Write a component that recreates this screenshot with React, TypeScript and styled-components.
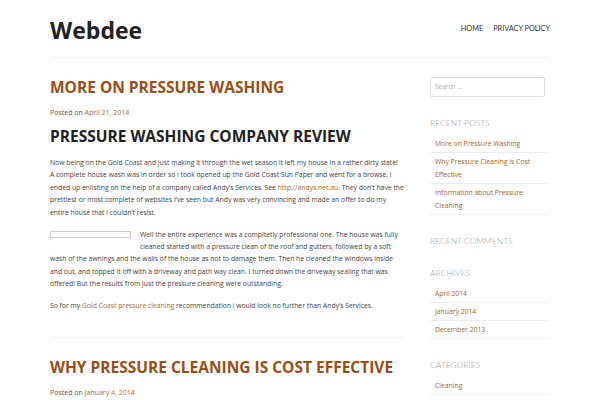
import React from "react";
import styled, { createGlobalStyle } from "styled-components";

const Global = createGlobalStyle`
  html, body { margin: 0; padding: 0; background: #fff; }
  body { font-family: "Open Sans", "Liberation Sans", sans-serif; color: #404040; }
  a { text-decoration: none; }
`;

const Page = styled.div`
  width: 500px;
  margin-left: 50px;
`;

const Header = styled.header`
  height: 57px;
  display: flex;
  align-items: center;
  justify-content: space-between;
  border-bottom: 1px solid #eee;
`;

const SiteTitle = styled.h1`
  margin: 2px 0 0 0;
  font-family: "Open Sans", sans-serif;
  font-weight: 700;
  font-size: 23px;
  color: #222;
`;

const Nav = styled.nav`
  display: flex;
  gap: 10px;
`;

const NavItem = styled.a`
  font-family: Lato, "Open Sans", sans-serif;
  font-size: 7.3px;
  color: #333;
  text-transform: uppercase;
`;

const Main = styled.div`
  display: flex;
  gap: 24px;
`;

const Content = styled.main`
  width: 356px;
  flex: none;
`;

const Article = styled.article<{ $divider?: boolean }>`
  padding-top: 18px;
  padding-bottom: ${(p) => (p.$divider ? "15px" : "0")};
  border-bottom: ${(p) => (p.$divider ? "1px solid #eee" : "none")};
  margin-right: ${(p) => (p.$divider ? "3px" : "0")};
`;

const EntryTitle = styled.h2<{ $dark?: boolean }>`
  margin: 0;
  font-family: "Open Sans", sans-serif;
  font-weight: 700;
  font-size: 15.5px;
  line-height: 22px;
  text-transform: uppercase;
  white-space: nowrap;
  color: ${(p) => (p.$dark ? "#222" : "#9b4d13")};
`;

const Meta = styled.div`
  font-size: 7px;
  color: #555;
  margin-top: 10px;
  line-height: 10px;
`;

const Link = styled.a`
  color: #b26a2d;
`;

const Body = styled.div`
  margin-top: 7px;
  font-size: 6.8px;
  line-height: 12.4px;
  color: #444;
  margin-right: -2px;
  p { margin: 0 0 9.5px 0; }
`;

const ImgBox = styled.span`
  float: left;
  width: 79px;
  height: 5px;
  border: 1px solid #ccc;
  margin: 2px 9px 8px 0;
`;

const Sidebar = styled.aside`
  width: 120px;
  flex: none;
  padding-top: 14px;
`;

const Search = styled.input`
  box-sizing: border-box;
  width: 115px;
  height: 20px;
  border: 1px solid #ddd;
  border-radius: 2px;
  padding: 0 4px;
  font-family: "Open Sans", sans-serif;
  font-size: 6.5px;
  color: #999;
  outline: none;
  &::placeholder { color: #aaa; }
`;

const Widget = styled.section`
  margin-top: 20px;
`;

const WidgetTitle = styled.h3`
  margin: 0;
  font-family: Lato, "Open Sans", sans-serif;
  font-weight: 300;
  font-size: 8.5px;
  color: #a0a0a0;
  text-transform: uppercase;
  line-height: 12px;
`;

const List = styled.ul`
  list-style: none;
  margin: 6px 0 0 0;
  padding: 0;
`;

const Item = styled.li`
  border-bottom: 1px solid #eee;
  padding: 2px 0 2px 5px;
  font-size: 6.8px;
  line-height: 13px;
  a { color: #a8622a; }
`;

export default function App() {
  return (
    <>
      <Global />
      <Page>
        <Header>
          <SiteTitle>Webdee</SiteTitle>
          <Nav>
            <NavItem>Home</NavItem>
            <NavItem>Privacy Policy</NavItem>
          </Nav>
        </Header>
        <Main>
          <Content>
            <Article $divider>
              <EntryTitle>More on Pressure Washing</EntryTitle>
              <Meta>
                Posted on <Link>April 21, 2014</Link>
              </Meta>
              <Body>
                <EntryTitle as="h1" $dark style={{ marginBottom: 10 }}>
                  Pressure Washing Company Review
                </EntryTitle>
                <p>
                  Now being on the Gold Coast and just making it through the wet season it left my
                  house in a rather dirty state! A{"\u00a0"}complete house wash was in order so i took opened
                  up the Gold Coast Sun Paper and went for a browse. I ended up enlisting on the help
                  of a company called Andy’s Services. See <Link>http://andys.net.au</Link>. They
                  don’t have the prettiest or most complete of websites I’ve seen but Andy was very
                  convincing and made an offer to do my entire house that i couldn’t resist.
                </p>
                <p>
                  <ImgBox />
                  Well the entire experience was a compltetly professional one. The house was fully
                  cleaned started with a pressure clean of the roof and gutters, followed by a soft
                  wash of the awnings and the walls of the house as not to damage them. Then he
                  cleaned the windows inside and out, and topped it off with a driveway and path way
                  clean. I turned down the driveway sealing that was offered! But the results from
                  just the pressure cleaning were outstanding.
                </p>
                <p>
                  So for my <Link>Gold Coast pressure cleaning</Link> recommendation i would look no
                  further than Andy’s Services.
                </p>
              </Body>
            </Article>
            <Article>
              <EntryTitle>Why Pressure Cleaning is Cost Effective</EntryTitle>
              <Meta>
                Posted on <Link>January 4, 2014</Link>
              </Meta>
            </Article>
          </Content>
          <Sidebar>
            <Search placeholder="Search …" />
            <Widget>
              <WidgetTitle>Recent Posts</WidgetTitle>
              <List>
                <Item><a>More on Pressure Washing</a></Item>
                <Item><a>Why Pressure Cleaning is Cost Effective</a></Item>
                <Item><a>Information about Pressure Cleaning</a></Item>
              </List>
            </Widget>
            <Widget>
              <WidgetTitle>Recent Comments</WidgetTitle>
            </Widget>
            <Widget>
              <WidgetTitle>Archives</WidgetTitle>
              <List>
                <Item><a>April 2014</a></Item>
                <Item><a>January 2014</a></Item>
                <Item><a>December 2013</a></Item>
              </List>
            </Widget>
            <Widget>
              <WidgetTitle>Categories</WidgetTitle>
              <List>
                <Item><a>Cleaning</a></Item>
              </List>
            </Widget>
          </Sidebar>
        </Main>
      </Page>
    </>
  );
}
